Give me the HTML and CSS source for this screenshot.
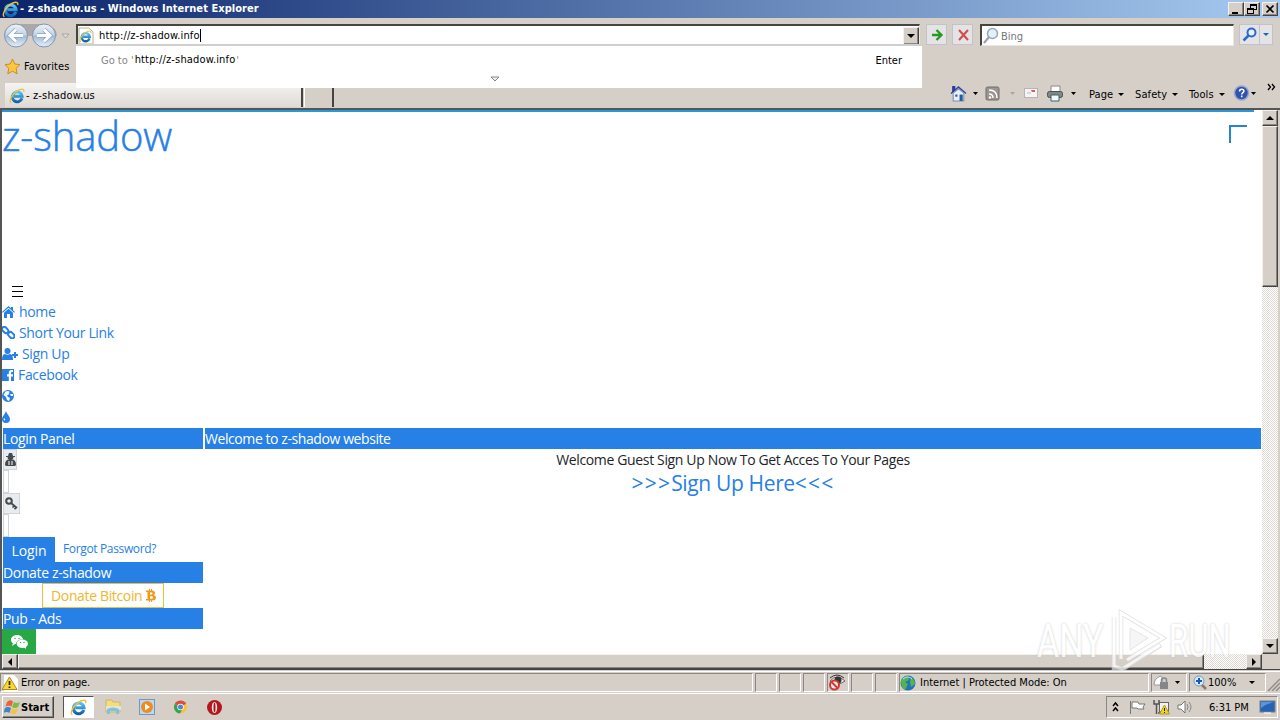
FILE: index.html
```html
<!DOCTYPE html>
<html lang="en">

<head>
  <meta charset="UTF-8">
  <meta name="viewport" content="width=device-width, initial-scale=1.0">
  <title>z-shadow.us</title>
  <link rel="stylesheet" href="styles.css">
</head>

<body>
  <!-- shared icons -->
  <svg width="0" height="0" class="defs">
    <defs>
      <linearGradient id="ball" x1="0" y1="0" x2="0" y2="1">
        <stop offset="0" stop-color="#eef3f8" />
        <stop offset=".48" stop-color="#c3d3e4" />
        <stop offset=".52" stop-color="#a3bbd3" />
        <stop offset="1" stop-color="#e4f0fa" />
      </linearGradient>
      <linearGradient id="ieBlue" x1="0" y1="0" x2="0" y2="1">
        <stop offset="0" stop-color="#5cc3f2" />
        <stop offset="1" stop-color="#1261b0" />
      </linearGradient>
      <symbol id="ie" viewBox="0 0 16 16">
        <path d="M13 10.300A5 5 0 1 1 13.200 8.300H5" fill="none" stroke="url(#ieBlue)" stroke-width="2.900" />
        <path d="M2.200 14.800C-.5 13 3 7 7 3.800 11 .7 15.500-.2 14.800 3.800" fill="none" stroke="#efbf3a" stroke-width="1.300" />
      </symbol>
      <symbol id="house" viewBox="0 0 16 16">
        <path d="M1 8 8 2l7 6" fill="#dfe7fb" stroke="#34469a" stroke-width="1.500" />
        <path d="M3 7.500 8 3.500l5 4V15H3z" fill="#e8eefa" stroke="#8090b8" />
        <path d="M2 1h3v4L2 7z" fill="#2c3c94" />
        <path d="M9 9h3v6H9z" fill="#1c5f9c" /><path d="M5 9h2v2H5z" fill="#36527c" />
      </symbol>
    </defs>
  </svg>

  <div class="screen">
    <header class="titlebar">
      <svg class="title-icon" width="17" height="17"><use href="#ie" /></svg>
      <span class="title-text">- z-shadow.us - Windows Internet Explorer</span>
      <div class="win-buttons">
        <span class="win-btn"><svg width="14" height="12"><path d="M3 9h6v2H3z" /></svg></span>
        <span class="win-btn"><svg width="14" height="12"><path d="M5 1h7v6H9v4H2V5h3zM6 3v2h3v1h2V3zM3 7v3h5V7z" fill-rule="evenodd" /></svg></span>
        <span class="win-btn close"><svg width="14" height="12"><path d="m3.500 2.500 7 7m0-7-7 7" stroke="#000" stroke-width="1.700" /></svg></span>
      </div>
    </header>

    <div class="navbar">
      <svg class="nav-arrows" width="74" height="26">
        <path d="M15 1h29q12 3 12 12H3Q3 3 15 1" fill="#aaa8ad" />
        <circle cx="15" cy="12.500" r="11.500" fill="url(#ball)" stroke="#8495ae" />
        <circle cx="43" cy="12.500" r="11.500" fill="url(#ball)" stroke="#8495ae" />
        <path d="M22 12.500H9m6-6-6 6 6 6M36 12.500h13m-6-6 6 6-6 6" fill="none" stroke="#8aa5c4" stroke-width="4.500" />
        <path d="M22 12.500H9m6-6-6 6 6 6M36 12.500h13m-6-6 6 6-6 6" fill="none" stroke="#fff" stroke-width="3" />
        <path d="M61 11h7l-3.500 4z" fill="#e3dfdb" stroke="#aaa49e" />
      </svg>
      <div class="address">
        <svg class="address-icon" width="16" height="18">
          <path d="M1 1h10l4 4v12H1z" fill="#fff" stroke="#b7b58e" />
          <use href="#ie" x="1" y="3" width="13" height="13" />
        </svg>
        <span class="address-text">http://z-shadow.info</span>
        <span class="caret"></span>
        <span class="raised drop"><i class="tri"></i></span>
        <div class="suggest">
          <span class="suggest-go">Go to '</span><span class="suggest-url">http://z-shadow.info</span><span class="suggest-go end">'</span>
          <span class="suggest-enter">Enter</span>
          <svg class="suggest-more" width="10" height="7"><path d="M1 1h8L5 5z" fill="#eee" stroke="#888" /></svg>
        </div>
      </div>
      <span class="tool-btn go"><svg width="20" height="20"><path d="M5 10h9M9.500 5l5 5-5 5" fill="none" stroke="#299722" stroke-width="2.300" /></svg></span>
      <span class="tool-btn stop"><svg width="20" height="20"><path d="m6 5 9 10M15 5 6 15" stroke="#d44e4e" stroke-width="2.100" /></svg></span>
      <div class="search">
        <svg width="19" height="18"><circle cx="10.500" cy="6.500" r="5" fill="#e2f1fa" stroke="#9aa7b7" stroke-width="1.500" /><path d="m7 10-5 6" stroke="#9aa0a8" stroke-width="2" /></svg>
        <span class="search-text">Bing</span>
      </div>
      <span class="tool-btn find"><svg width="20" height="20"><circle cx="11.500" cy="7.500" r="4" fill="#e8f0fc" stroke="#2e67cf" stroke-width="2" /><path d="m8.500 10.500-5 5" stroke="#2e67cf" stroke-width="2.500" /></svg></span>
      <span class="tool-btn find-drop"><i class="tri blue"></i></span>
    </div>

    <div class="favbar">
      <svg width="17" height="17" viewBox="0 0 17 17"><path d="m8.500 1 2.300 5 5.200.6-3.900 3.700 1 5.500-4.600-2.700-4.700 2.700 1-5.500L1 6.600 6.200 6z" fill="#ffc83c" stroke="#c98b2d" /></svg>
      <span class="fav-text">Favorites</span>
    </div>

    <div class="tabbar">
      <div class="tab">
        <svg width="16" height="16"><use href="#ie" /></svg>
        <span class="tab-text">- z-shadow.us</span>
      </div>
      <div class="tab-new"></div>
      <div class="commands">
        <svg class="cmd-icons" width="136" height="20">
          <use href="#house" x="2" y="1" width="17" height="17" />
          <path d="M25 8h5l-2.500 3zM123 8h5l-2.500 3z" />
          <path d="M62 8h5l-2.500 3z" fill="#aaa5a0" />
          <rect x="38" y="3" width="13" height="13" rx="1.500" fill="#9a9591" stroke="#706c68" />
          <path d="M41 6q8 0 8 8M41 10q4 0 4 4" fill="none" stroke="#fff" stroke-width="1.500" /><circle cx="42" cy="13.500" r="1.200" fill="#fff" />
          <rect x="76.500" y="4.500" width="13" height="9" fill="#f6f4f5" stroke="#b9b2b5" /><path d="M83 6h4v2h-3" fill="#d45f5f" /><path d="M79 9h4" stroke="#bbb" />
          <path d="M103 2h9v6h-9z" fill="#fff" stroke="#888" /><rect x="99.500" y="7.500" width="15" height="6" rx="2" fill="#858585" stroke="#4f4f4f" /><path d="M103 11h8v6h-8z" fill="#f4f8fa" stroke="#366" />
        </svg>
        <span class="cmd page">Page<i class="tri small"></i></span>
        <span class="cmd safety">Safety<i class="tri small"></i></span>
        <span class="cmd tools">Tools<i class="tri small"></i></span>
        <svg class="help" width="25" height="18"><circle cx="8.500" cy="9" r="7" fill="#2f51b1" stroke="#98a7c9" stroke-width="1.500" /><path d="M6.500 7.500q0-2.300 2.200-2.300t2.200 1.900c0 1.700-2.200 1.500-2.200 3.500m0 1v1.600" fill="none" stroke="#fff" stroke-width="1.500" /><path d="M18 8h5l-2.500 3z" /></svg>
        <svg class="chevrons" width="9" height="8"><path d="m1 1 2.500 3L1 7m4-6 2.500 3L5 7" fill="none" stroke="#000" stroke-width="1.300" /></svg>
      </div>
    </div>

    <div class="viewport">
      <div class="page-row">
        <main class="site">
          <div class="progress"></div>
          <div class="spinner"></div>
          <h1>z-shadow</h1>
          <svg class="burger" width="11" height="11"><path d="M0 .5h11M0 5.500h11M0 10.500h11" stroke="#000" /></svg>
          <nav>
            <a class="nav-home"><svg width="13" height="12" viewBox="0 0 13 12"><path d="m0 6 6.500-6L9 2.300V1h2v3.200L13 6l-.8.800-5.700-5L.8 6.800zM2 6.800l4.500-4 4.500 4V12H8V8H5v4H2z" /></svg>home</a>
            <a class="nav-link"><svg width="13" height="13" viewBox="0 0 13 13"><g fill="none" stroke="#2680e6" stroke-width="2"><rect x="-.2" y="2" width="7" height="4.500" rx="2.200" transform="rotate(45 3.500 4)" /><rect x="6" y="7" width="7" height="4.500" rx="2.200" transform="rotate(45 9.500 9)" /></g></svg>Short Your Link</a>
            <a class="nav-sign"><svg width="16" height="12" viewBox="0 0 16 12"><circle cx="5.500" cy="3" r="3" /><path d="M3 6q2.500 1.500 5 0 3 0 3 6H0q0-6 3-6M12 4h2v2h2v2h-2v2h-2V8h-2V6h2z" /></svg>Sign Up</a>
            <a class="nav-face"><svg width="12" height="12" viewBox="0 0 12 12"><path d="M0 0h12v12H9V7.500h2V5.300H9V4q0-1 1-1h1V1H9.300Q6.800 1 6.800 3.800v1.500H5v2.200h1.800V12H0z" /></svg>Facebook</a>
            <a><svg width="12" height="12" viewBox="0 0 12 12"><path d="M6 0a6 6 0 1 0 0 12A6 6 0 0 0 6 0M3.500 1.500 6 1l2 1-1.500 1 1 1L5 5.500l1 1.500 2 1-1 3-2-1-1-3-2.500-2z" fill-rule="evenodd" /><path d="M8 4h3v2H9z" fill="#fff" /></svg></a>
            <a><svg width="8" height="12" viewBox="0 0 8 12"><path d="M4 0q.8 2.500 2.500 4.500Q8 6.300 8 8a4 4 0 0 1-8 0q0-1.700 1.500-3.500Q3.200 2.500 4 0" /><path d="M2 7q-1 2 1 2.500Q4 8 2 7" fill="#fff" /></svg></a>
          </nav>
          <div class="columns">
            <aside>
              <h2 class="login-panel">Login Panel</h2>
              <div class="addon user"><svg width="11" height="13" viewBox="0 0 11 13"><path d="M4 0h3l1 3h2v1H8.500q0 2-1.500 2.500 4 0 4 5.500l-1 1H1l-1-1q0-5.500 4-5.500Q2.500 6 2.500 4H1V3h2z" /><path d="M4 8v4m3-4v4" stroke="#fff" /></svg></div>
              <div class="field"></div>
              <div class="addon key"><svg width="13" height="13" viewBox="0 0 13 13"><circle cx="4" cy="4" r="2.800" fill="none" stroke="#444a50" stroke-width="2" /><path d="m6 6 6 5M9 9l-1.500 1.500M11 10.500 9.500 12.300" stroke="#444a50" stroke-width="1.700" /></svg></div>
              <div class="field"></div>
              <div class="login-row"><span class="login-btn">Login</span><a class="forgot">Forgot Password?</a></div>
              <h2 class="donate-title">Donate z-shadow</h2>
              <div class="donate"><span class="donate-text">Donate Bitcoin</span><svg width="10" height="13" viewBox="0 0 10 13"><path d="M0 1.500h3V0h1v1.500h1V0h1v1.500q3 .2 3 2.800 0 1.200-1.200 1.800Q10 6.700 10 8.500q0 3-4 3V13H5v-1.500H4V13H3v-1.500H0V10h1.500V3H0zM4 3.500v2h1.500q1 0 1-1t-1-1zm0 3.700v2.500h1.800q1.300 0 1.300-1.200 0-1.300-1.300-1.300z" fill="#ef9a18" fill-rule="evenodd" /></svg></div>
              <h2 class="pub">Pub - Ads</h2>
              <div class="chat"><svg width="17" height="14" viewBox="0 0 17 14"><path d="M6 0c3 0 6 2 6 4.500h-1C7.500 4.500 5 6.500 5 9 1 9 0 6.500 0 4.500 0 2 3 0 6 0" /><ellipse cx="11.300" cy="8.700" rx="5.700" ry="4.200" /><path d="m2 8-1 3 3-2m9 3 2 2v-3" /><g fill="#28a745"><circle cx="4" cy="3.500" r=".7" /><circle cx="8" cy="3.500" r=".7" /><circle cx="9.500" cy="7.500" r=".7" /><circle cx="13" cy="7.500" r=".7" /></g></svg></div>
            </aside>
            <section class="welcome">
              <h2 class="welcome-title">Welcome to z-shadow website</h2>
              <p class="guest">Welcome Guest Sign Up Now To Get Acces To Your Pages</p>
              <a class="signup"><span class="angles">&gt;&gt;&gt;</span>Sign Up Here<span class="angles">&lt;&lt;&lt;</span></a>
            </section>
          </div>
        </main>
        <div class="vscroll">
          <span class="raised"><i class="tri up"></i></span>
          <span class="raised vthumb"></span>
          <span class="raised vdown"><i class="tri"></i></span>
        </div>
      </div>
      <div class="hscroll">
        <span class="raised"><i class="tri left"></i></span>
        <span class="raised hthumb"></span>
        <span class="raised hright"><i class="tri right"></i></span>
      </div>
    </div>

    <div class="statusbar">
      <div class="pane error">
        <svg width="16" height="16"><path d="M2 0h10l4 4v12H2z" fill="#fff" /><path d="M7.500 2 15 14.500H0z" fill="#f8d92c" stroke="#a98f20" /><path d="M7.500 6v4m0 1.500V13" stroke="#222" stroke-width="1.700" /></svg>
        <span class="error-text">Error on page.</span>
      </div>
      <div class="pane cell"></div>
      <div class="pane cell"></div>
      <div class="pane cell"></div>
      <div class="pane cell"><svg width="18" height="17"><path d="M2 7q7-8 15 0-8 6-15 0" fill="#eee" stroke="#666" /><circle cx="10" cy="6" r="3.500" fill="#333" /><path d="M2 4q7-6 14 0" fill="none" stroke="#333" /><circle cx="6.500" cy="11" r="4.500" fill="#fbe9e9" stroke="#cf3835" stroke-width="2" /><path d="m3.500 8 6 6" stroke="#cf3835" stroke-width="2" /></svg></div>
      <div class="pane cell"></div>
      <div class="pane cell"></div>
      <div class="pane zone">
        <svg width="16" height="16"><circle cx="8" cy="8" r="7.500" fill="#2471bd" /><path d="M1 6q2-5 7-5l1 4-4 2 3 2-3 6Q1 13 1 6M11 2q4 3 4 7l-4 3-1-5z" fill="#55b44c" /><path d="M3 4q5-4 9 0" stroke="#bfe5f4" fill="none" /></svg>
        <span class="zone-text">Internet | Protected Mode: On</span>
      </div>
      <div class="pane lock"><svg width="32" height="17"><path d="M2 11q0-7 7-9l2 3-3 6z" fill="#fff" stroke="#999" /><rect x="8" y="8" width="8" height="7" fill="#85858a" /><path d="M9.500 8V6q0-2 2.500-2t2.500 2v2" fill="none" stroke="#85858a" stroke-width="1.500" /><path d="M23 7h5l-2.500 3z" /></svg></div>
      <div class="pane zoom">
        <svg width="14" height="15"><circle cx="6" cy="6" r="5" fill="#d7ebfb" stroke="#6e9dc9" /><path d="M6 3v6M3 6h6" stroke="#1c59b7" stroke-width="2" /><path d="m9 10 4 4" stroke="#917667" stroke-width="2.500" /></svg>
        <span class="zoom-text">100%</span><i class="tri small"></i>
      </div>
      <svg class="grip" width="13" height="13"><path d="M1 13 13 1M5 13l8-8M9 13l4-4" stroke="#928d87" stroke-width="1.500" /></svg>
    </div>

    <footer class="taskbar">
      <div class="start">
        <svg width="17" height="16"><path d="M3 3q3-3 6-.5L7.500 7.500Q5 6 1.500 7.500z" fill="#e8643c" /><path d="M10 3q3 2 6 0l-2 5q-3 2-6 0z" fill="#7dbb42" /><path d="M1 9q3-2 6 0l-1.500 5Q3 12-.5 14z" fill="#3f82ce" /><path d="M8 9.500q3 2 6 0l-2 5q-3 1.500-5.500-.500z" fill="#f6c339" /></svg>
        <span class="start-text">Start</span>
      </div>
      <div class="task-active"><svg width="17" height="17"><use href="#ie" /></svg></div>
      <svg class="apps" width="122" height="20">
        <path d="M2 3h6l1 2h7v10H2z" fill="#f4dc82" stroke="#cfb562" /><path d="M2 9h15v4H2z" fill="#e2e9c8" /><path d="M3 17v-5q6-3 12 0v5h-3v-3H6v3z" fill="#83bfe4" />
        <rect x="35.500" y="2.500" width="15" height="15" fill="#b9daf1" stroke="#6a9bc8" /><circle cx="43" cy="10" r="6" fill="#f38a1e" /><path d="m41 6.500 5 3.500-5 3.500z" fill="#fff" />
        <circle cx="76.500" cy="10" r="6.500" fill="#fbc52e" /><path d="M76.500 10 70.900 6.700a6.500 6.500 0 0 1 11.200 0z" fill="#df4c3c" /><path d="m76.500 10-5.600-3.300a6.500 6.500 0 0 0 5 9.800l3-5z" fill="#32a457" /><circle cx="76.500" cy="10" r="3.200" fill="#fff" /><circle cx="76.500" cy="10" r="2.500" fill="#4a85df" />
        <circle cx="110.500" cy="10.500" r="7.500" fill="#b5161c" /><ellipse cx="110.500" cy="10.500" rx="2.700" ry="5.500" fill="#f2e4e4" /><ellipse cx="110.500" cy="10.500" rx="1" ry="4.800" fill="#a0191c" />
      </svg>
      <div class="tray">
        <svg width="90" height="20"><path d="m6 9 2.500-3L11 9m-5 5 2.500-3L11 14" fill="none" stroke="#000" stroke-width="1.500" />
          <path d="M23.500 4v13M25 5h6l1 2h6l-2 3 1 2h-6l-1-1h-5z" fill="#fff" stroke="#777" />
          <rect x="52.500" y="5.500" width="9" height="9" fill="#f3f3f3" stroke="#666" /><path d="M47 3v4h5V3m-2.500 4v10M60 16h-9" fill="none" stroke="#555" stroke-width="1.500" /><path d="m57.500 8 5 9h-10z" fill="#f2d32b" stroke="#b29a20" /><path d="M57.500 11v3m0 1v1" stroke="#222" />
          <path d="M71 8h3l4-4v12l-4-4h-3z" fill="#fff" stroke="#777" /><path d="M80 7q2 3 0 6m2-8q4 5 0 10" fill="none" stroke="#888" /></svg>
        <span class="clock">6:31 PM</span>
        <svg width="17" height="16"><rect x="1" y="2" width="15" height="11" fill="#2862b4" stroke="#777f88" /><path d="M2 3h13q-8 2-13 6z" fill="#5c95d7" /><path d="M5 14h7" stroke="#fff" /></svg>
      </div>
    </footer>

    <div class="watermark">
      <span class="any">ANY</span>
      <svg width="58" height="64" viewBox="0 0 58 64"><g fill="none" stroke="#d6d6d6" stroke-width="4.500"><path d="M11 50V4l42 25-36 22M4 8v52h9l38-24" /></g><g fill="#f4f4f4" stroke="#fff" stroke-width="3"><path d="M11 50V4l42 25-36 22" fill="none" /><path d="M4 8v49l8 3 38-24" fill="none" /><path d="M20 19v22l18-12z" stroke="#ddd" stroke-width="1" /></g></svg>
      <span class="run">RUN</span>
    </div>
  </div>
</body>

</html>
```
FILE: styles.css
```css
* {
  box-sizing: border-box;
}

body {
  margin: 0;
  overflow: hidden;
}

svg {
  display: block;
  flex: none;
}

.defs {
  position: absolute;
}

.screen {
  background: #d5cfc8;
  color: #000;
  display: flex;
  flex-direction: column;
  font: 11px/14px "DejaVu Sans Condensed", "DejaVu Sans", sans-serif;
  font-stretch: condensed;
  height: 720px;
  overflow: hidden;
  position: relative;
  white-space: nowrap;
  width: 1280px;
}

.titlebar {
  align-items: center;
  background: linear-gradient(90deg, #0a246a, #a6caf0);
  color: #fff;
  display: flex;
  flex: none;
  height: 18px;
  padding: 0 2px;
}

.title-text {
  font-weight: bold;
  letter-spacing: 0.05px;
  margin-left: 1px;
}

.win-buttons {
  display: flex;
  margin-left: auto;
}

.win-btn,
.raised {
  align-items: center;
  background: #d5cfc8;
  border: 1px solid;
  border-color: #f4f1ec #444 #444 #f4f1ec;
  box-shadow: inset -1px -1px #8b8680;
  display: flex;
  flex: none;
  justify-content: center;
}

.win-btn {
  height: 14px;
  width: 16px;
}

.close {
  margin-left: 2px;
}

.tri {
  border: 4px solid transparent;
  border-bottom: 0;
  border-top-color: #000;
}

.tri.small,
.tri.blue {
  border-left-width: 3px;
  border-right-width: 3px;
  border-top-width: 3px;
}

.tri.blue {
  border-top-color: #285fbb;
}

.tri.up {
  transform: rotate(180deg);
}

.tri.left {
  transform: rotate(90deg);
}

.tri.right {
  transform: rotate(-90deg);
}

.navbar {
  display: flex;
  flex: none;
  height: 34px;
  padding: 5px 5px 0 1px;
}

.nav-arrows {
  margin-right: 1px;
}

.address,
.search {
  align-items: center;
  background: #fff;
  border: 1px solid #e9e5e0;
  border-left: 2px solid #454545;
  border-top: 2px solid #454545;
  display: flex;
  flex: none;
  height: 22px;
  margin-top: 1px;
}

.address {
  position: relative;
  width: 844px;
}

.address-text {
  letter-spacing: 0.15px;
  margin-left: 5px;
  padding-top: 1px;
}

.caret {
  background: #000;
  height: 13px;
  width: 1px;
}

.drop {
  height: 18px;
  margin-left: auto;
  width: 16px;
}

/* drop-down under the address field */
.suggest {
  align-items: flex-start;
  background: #fff;
  border-top: 2px solid #cfcfcf;
  display: flex;
  height: 44px;
  left: -2px;
  padding: 7px 20px 0 25px;
  position: absolute;
  top: 18px;
  width: 846px;
  z-index: 2;
}

.suggest-go {
  color: #858585;
  padding-top: 1px;
}

.suggest-go.end {
  margin-left: 1px;
}

.suggest-url {
  letter-spacing: 0.15px;
  margin-left: 1px;
}

.suggest-enter {
  margin-left: auto;
  padding-top: 1px;
}

.suggest-more {
  left: 414px;
  position: absolute;
  top: 30px;
}

.tool-btn {
  align-items: center;
  background: #e4e4e6;
  border: 1px solid #c0c3cc;
  display: flex;
  flex: none;
  height: 21px;
  justify-content: center;
  margin-top: 1px;
}

.go {
  margin-left: 6px;
  width: 21px;
}

.stop {
  margin-left: 5px;
  width: 21px;
}

.search {
  color: #757575;
  margin-left: 7px;
  width: 254px;
}

.search-text {
  padding-top: 2px;
}

.find {
  margin-left: 5px;
  width: 21px;
}

.find-drop {
  border-left: 0;
  width: 13px;
}

.favbar {
  align-items: center;
  display: flex;
  flex: none;
  height: 28px;
  padding-left: 4px;
}

.fav-text {
  letter-spacing: 0.1px;
  margin-left: 3px;
  padding-top: 1px;
}

.tabbar {
  display: flex;
  flex: none;
  height: 28px;
  padding: 3px 0 1px 5px;
}

.tab {
  align-items: center;
  background: linear-gradient(#f5f4f2, #dedad5);
  border-right: 2px solid #444;
  display: flex;
  flex: none;
  padding: 2px 4px 0;
  width: 298px;
}

.tab-text {
  letter-spacing: 0.15px;
  margin-left: 1px;
}

.tab-new {
  border-left: 1px solid #fff;
  border-right: 2px solid #444;
  margin-left: 1px;
  width: 30px;
}

.commands {
  display: flex;
  margin-left: 614px;
  padding-top: 1px;
}

.cmd {
  align-items: center;
  display: flex;
  height: 21px;
  justify-content: space-between;
}

.page {
  letter-spacing: 0.1px;
  margin-left: 5px;
  width: 35px;
}

.safety {
  letter-spacing: 0.1px;
  margin-left: 11px;
  width: 43px;
}

.tools {
  letter-spacing: 0.1px;
  margin-left: 11px;
  width: 36px;
}

.help {
  margin-left: 8px;
}

.chevrons {
  margin-left: 9px;
  margin-top: -1px;
}

.viewport {
  border-left: 2px solid #555;
  border-top: 2px solid #555;
  border-bottom: 1px solid #444;
  height: 562px;
  flex: none;
}

.page-row {
  display: flex;
  height: 544px;
}

.site {
  background: #fff;
  color: #212529;
  font: 14px/21px "Open Sans", "Noto Sans", sans-serif;
  height: 544px;
  letter-spacing: -0.35px;
  overflow: hidden;
  position: relative;
  width: 1260px;
}

.progress {
  background: #2599dc;
  height: 2px;
  width: 1252px;
}

.spinner {
  border-left: 2px solid #2584d0;
  border-top: 2px solid #2584d0;
  height: 18px;
  position: absolute;
  right: 15px;
  top: 15px;
  width: 18px;
}

h1 {
  -webkit-text-stroke: 0.5px #2680e6;
  color: #2680e6;
  font-size: 40px;
  font-weight: 300;
  letter-spacing: -0.1px;
  line-height: 48px;
  margin: 0 0 126px;
}

.burger {
  margin: 0 0 4px 10px;
}

nav {
  margin-bottom: 1px;
}

nav a {
  align-items: center;
  color: #2680e6;
  display: flex;
  fill: #2680e6;
  gap: 4px;
  height: 21px;
}

.columns {
  display: flex;
  gap: 2px;
  margin-left: 1px;
}

aside {
  width: 200px;
}

h2 {
  background: #2680e6;
  color: #fff;
  font-size: 14px;
  font-weight: normal;
  height: 21px;
  line-height: 22px;
  margin: 0;
}

.addon {
  align-items: center;
  background: #e9ecef;
  border: 1px solid #d0d4d8;
  display: flex;
  fill: #444a50;
  height: 21px;
  justify-content: center;
}

.user {
  width: 14px;
}

.key {
  width: 17px;
}

.field {
  border: 1px solid #ced4da;
  height: 23px;
  width: 6px;
}

.login-row {
  display: flex;
}

.login-btn {
  background: #2680e6;
  color: #fff;
  height: 25px;
  letter-spacing: -0.1px;
  line-height: 27px;
  text-align: center;
  width: 52px;
}

.forgot {
  color: #2680e6;
  font-size: 12px;
  line-height: 23px;
  margin-left: 8px;
}

.donate {
  align-items: center;
  border: 1px solid #f0bd3a;
  color: #f0b62c;
  display: flex;
  gap: 4px;
  height: 25px;
  margin-left: 39px;
  padding-left: 8px;
  width: 122px;
}

.chat {
  align-items: center;
  background: #28a745;
  display: flex;
  fill: #fff;
  height: 26px;
  justify-content: center;
  margin-left: -1px;
  width: 34px;
}

.welcome {
  flex: 1;
  margin-right: 1px;
  text-align: center;
}

.welcome-title {
  letter-spacing: -0.42px;
  text-align: left;
}

.guest {
  margin: 0;
  line-height: 22px;
}

.signup {
  color: #2680e6;
  display: block;
  font-size: 21px;
  line-height: 25px;
}

.angles {
  letter-spacing: 1.2px;
}

.vscroll {
  background: repeating-conic-gradient(#fff 0 25%, #ddd8d2 0 50%) 0 0 / 2px 2px;
  display: flex;
  flex-direction: column;
  width: 16px;
}

.vscroll .raised {
  height: 16px;
}

.vscroll .vthumb {
  height: 161px;
}

.vdown {
  margin-top: auto;
  margin-bottom: 0;
}

.hscroll {
  background: repeating-conic-gradient(#fff 0 25%, #ddd8d2 0 50%) 0 0 / 2px 2px;
  display: flex;
  height: 15px;
  width: 1260px;
}

.hscroll .raised {
  width: 16px;
}

.hscroll .hthumb {
  width: 1186px;
}

.hright {
  margin-left: auto;
}

.statusbar {
  border-bottom: 1px solid #fff;
  border-top: 1px solid #fff;
  display: flex;
  flex: none;
  gap: 2px;
  height: 23px;
  margin-top: 1px;
  padding-top: 1px;
}

.pane {
  align-items: center;
  border: 1px solid #fff;
  border-left-color: #8b8680;
  border-top-color: #8b8680;
  display: flex;
  flex: none;
  height: 19px;
}

.error {
  padding-left: 1px;
  width: 753px;
}

.error-text {
  letter-spacing: -0.1px;
  margin-left: 3px;
  padding-top: 1px;
}

.cell {
  width: 22px;
}

.zone {
  width: 250px;
}

.zone-text {
  margin-left: 4px;
  padding-top: 1px;
}

.lock {
  width: 36px;
}

.zoom {
  padding-left: 3px;
  width: 77px;
}

.zoom-text {
  margin: 0 13px 0 1px;
  padding-top: 1px;
}

.grip {
  margin-left: -1px;
  margin-top: 5px;
}

.taskbar {
  align-items: flex-start;
  display: flex;
  flex: 1;
  padding: 2px 2px 0;
}

.start {
  align-items: center;
  border: 1px solid;
  border-color: #fff #444 #444 #fff;
  box-shadow: inset -1px -1px #8b8680;
  display: flex;
  height: 22px;
  padding-left: 1px;
  width: 52px;
}

.start-text {
  font-weight: bold;
  padding-top: 1px;
}

.task-active {
  align-items: center;
  background: #fff;
  border: 1px solid #555;
  border-bottom-color: #fff;
  border-right-color: #fff;
  display: flex;
  height: 22px;
  justify-content: center;
  margin-left: 9px;
  width: 31px;
}

.apps {
  margin-left: 10px;
  margin-top: 1px;
}

.tray {
  align-items: center;
  border: 1px solid #fff;
  border-left-color: #8b8680;
  border-top-color: #8b8680;
  display: flex;
  height: 22px;
  margin-left: auto;
  width: 172px;
}

.clock {
  margin: 0 10px 0 12px;
  padding-top: 1px;
}

/* translucent logo over the lower right corner */
.watermark {
  align-items: center;
  color: #fff;
  display: flex;
  font: 46px/60px Roboto, sans-serif;
  height: 64px;
  left: 1037px;
  opacity: 0.75;
  position: absolute;
  text-shadow: 0 0 3px #bbb;
  top: 609px;
  width: 200px;
}

.any,
.run {
  flex: none;
  transform: scaleX(0.74);
  transform-origin: left;
  width: 73px;
}

.run {
  margin-left: 1px;
  transform: scaleX(0.68);
  width: 62px;
}
```
